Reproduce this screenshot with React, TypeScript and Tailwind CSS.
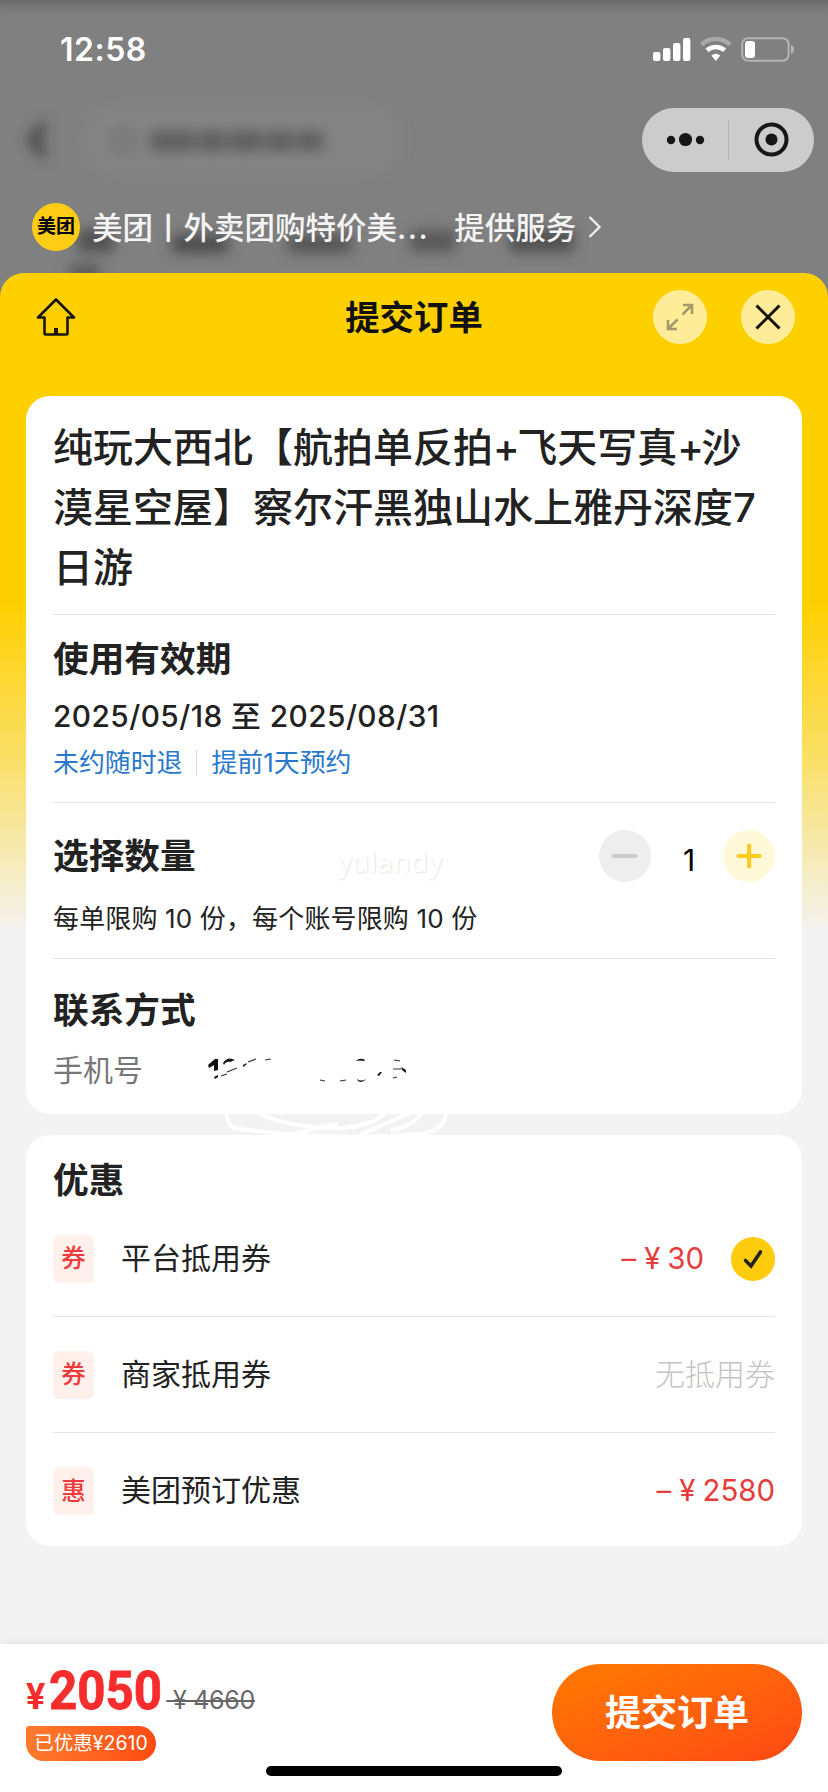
import type { ReactNode } from 'react';

const FONT = "font-['Inter','Noto_Sans_CJK_SC',sans-serif]";

interface DiscountRow {
  tag: string;
  label: string;
  value: string;
  available: boolean;
  checked?: boolean;
}

const discounts: DiscountRow[] = [
  { tag: '券', label: '平台抵用券', value: '30', available: true, checked: true },
  { tag: '券', label: '商家抵用券', value: '无抵用券', available: false },
  { tag: '惠', label: '美团预订优惠', value: '2580', available: true },
];

function StatusIcons() {
  return (
    <svg width="144" height="26" viewBox="0 0 144 26" fill="none">
      <rect x="1" y="16" width="7.4" height="9" rx="2" fill="#fff" />
      <rect x="11" y="12" width="7.4" height="13" rx="2" fill="#fff" />
      <rect x="21" y="7" width="7.4" height="18" rx="2" fill="#fff" />
      <rect x="31" y="2" width="7.4" height="23" rx="2" fill="#fff" />
      <path d="M49.5 8.6a21 21 0 0 1 28.6 0" stroke="#a9a9a9" strokeWidth="4.4" />
      <path d="M55 14.3a13.2 13.2 0 0 1 17.6 0" stroke="#fff" strokeWidth="4.6" />
      <path d="M59.4 19.6a7 7 0 0 1 8.8 0L63.8 25z" fill="#fff" />
      <rect x="90.2" y="2.2" width="46.4" height="22.6" rx="6" stroke="#b4b4b4" strokeWidth="2" />
      <rect x="93" y="5" width="10" height="17" rx="3" fill="#fff" />
      <path d="M139 9c4 1.4 4 7.6 0 9z" fill="#b4b4b4" />
    </svg>
  );
}

/* Page that sits out of focus behind the sheet */
function BlurredPage() {
  return (
    <svg className="absolute inset-0" width="828" height="290" viewBox="0 0 828 290" fill="none">
      <defs>
        <filter id="soft" x="-50%" y="-100%" width="200%" height="300%">
          <feGaussianBlur stdDeviation="6.5" />
        </filter>
      </defs>
      <rect x="-10" y="-10" width="848" height="13" fill="#5c5c5c" filter="url(#soft)" />
      <g filter="url(#soft)">
        <rect x="83" y="106" width="318" height="68" rx="34" fill="#848484" />
        <path d="M45 124L32 140l13 16" stroke="#3c3c3c" strokeWidth="8" />
        <circle cx="123" cy="141" r="10" stroke="#6c6c6c" strokeWidth="5" />
        <path d="M149 141h46M198 141h28M229 141h34M266 141h28M297 141h27" stroke="#5e5e5e" strokeWidth="22" />
        <rect x="78" y="230" width="36" height="22" fill="#505050" />
        <rect x="172" y="235" width="56" height="18" fill="#4c4c4c" />
        <rect x="288" y="235" width="64" height="18" fill="#545454" />
        <rect x="410" y="230" width="46" height="22" fill="#585858" />
        <rect x="510" y="230" width="64" height="22" fill="#505050" />
        <rect x="70" y="264" width="30" height="18" fill="#585858" />
      </g>
    </svg>
  );
}

function RoundButton({ children }: { children: ReactNode }) {
  return (
    <button className="flex h-[54px] w-[54px] items-center justify-center rounded-full bg-[#ffec99]">
      {children}
    </button>
  );
}

function SheetHeader() {
  return (
    <header className="flex h-[88px] items-center pl-[36px] pr-[33px]">
      <div className="flex-1">
        <svg width="40" height="40" viewBox="0 0 40 40" fill="none" stroke="#1a1400" strokeWidth="2.6" strokeLinejoin="round">
          <path d="M20 2.5L2 20.5h6.5v16a1 1 0 0 0 1 1h21a1 1 0 0 0 1-1v-16H38z" />
          <path d="M20 31v7" strokeWidth="4" />
        </svg>
      </div>
      <h1 className="pr-[3px] pt-[2px] text-[34.4px] font-bold leading-[48px] text-[#111]">提交订单</h1>
      <div className="flex flex-1 justify-end gap-[34px]">
        <RoundButton>
          <svg width="30" height="30" viewBox="0 0 30 30" fill="none" stroke="#a39a6c" strokeWidth="2.6">
            <path d="M17.5 12.5L27 3M18 3h9v9M12.5 17.5L3 27M3 18v9h9" />
          </svg>
        </RoundButton>
        <RoundButton>
          <svg width="28" height="28" viewBox="0 0 28 28" fill="none" stroke="#14110a" strokeWidth="3">
            <path d="M2.5 2.5l23 23M25.5 2.5l-23 23" />
          </svg>
        </RoundButton>
      </div>
    </header>
  );
}

function SectionTitle({ children }: { children: ReactNode }) {
  return <h2 className="text-[35.7px] font-bold leading-[44px] text-[#222]">{children}</h2>;
}

/* What is left of the phone number after it was scribbled over */
function MaskedPhone() {
  return (
    <svg className="absolute left-[200px] top-[1050px]" width="260" height="90" viewBox="0 0 260 90" fill="none">
      <g fill="#111">
        <path d="M8 15l7-6h3v11l-4 1v-6l-5 3z" />
        <path d="M14 27l4-2v2l-3 2zM23 13q4-6 9-4l3 1-5 2q-4-1-6 3z" />
        <path d="M43 15l4-2-1 2-3 2zM156 11q4-4 9-1l-1 1q-3-1-8 0zM157 29q4 3 9 0-2 3-5 3t-4-3z" />
        <path d="M177 25l3-3h2l-3 4zM201 17l5 3v3l-4-3z" />
      </g>
      <g stroke="#333" strokeWidth="1.2">
        <path d="M21 26l6-2M27 22l10-4M48 12l8-3M65 10l6-1M120 30l5 1M140 31l6-1M194 10l6 1M193 28l4-1M193 19l8 0" />
      </g>
      <g stroke="#fff" strokeWidth="4" strokeLinecap="round">
        <path d="M26 62q2 14 8 16 90 14 188 6 22-4 24-20" />
        <path d="M60 64q30 14 80 14 32-2 44-14M208 64l-46 20M222 62q-8 14-30 18M92 84l44-10" />
      </g>
    </svg>
  );
}

function ProductCard() {
  return (
    <section className="h-[718px] rounded-[24px] bg-white px-[27px]">
      <div className="h-[219px] border-b border-[#e2e2e2] pt-[22px]">
        <p className="text-[40px] font-medium leading-[60px] text-[#222]">
          纯玩大西北【航拍单反拍<span className="tracking-[-2.5px]">+</span>飞天写真<span className="tracking-[-2.5px]">+</span>沙
          <br />
          漠星空屋】察尔汗黑独山水上雅丹深度7
          <br />
          日游
        </p>
      </div>

      <div className="h-[188px] border-b border-[#e2e2e2] pt-[22px]">
        <SectionTitle>使用有效期</SectionTitle>
        <p className="mt-[15px] text-[29.8px] font-medium leading-[40px] tracking-[0.45px] text-[#222]">
          2025/05/18 至 2025/08/31
        </p>
        <div className="mt-[11px] flex items-center text-[25.9px] leading-[32px] text-[#2878cc]">
          <span>未约随时退</span>
          <span className="mx-[14px] h-[26px] w-px bg-[#dcdcdc]" />
          <span>提前1天预约</span>
        </div>
      </div>

      <div className="h-[156px] border-b border-[#e2e2e2] pt-[27px]">
        <div className="flex items-center">
          <SectionTitle>选择数量</SectionTitle>
          <span className="ml-[142px] mt-[10px] font-['Open_Sans',sans-serif] text-[28px] leading-[36px] tracking-[0.4px] text-white [text-shadow:1px_1px_2px_#e2e2e2]">
            yulandy
          </span>
          <div className="ml-auto flex items-center">
            <button className="flex h-[52px] w-[52px] items-center justify-center rounded-full bg-[#eee]">
              <span className="h-[4px] w-[26px] rounded-full bg-[#ccc]" />
            </button>
            <span className="w-[72px] pl-[4px] pt-[7px] text-center text-[30px] leading-[40px] text-black">1</span>
            <button className="flex h-[52px] w-[52px] items-center justify-center rounded-full bg-[#fff9d9]">
              <svg width="26" height="26" viewBox="0 0 26 26" stroke="#ffcb1f" strokeWidth="4.2" strokeLinecap="round">
                <path d="M13 2.5v21M2.5 13h21" />
              </svg>
            </button>
          </div>
        </div>
        <p className="mt-[21px] text-[26px] leading-[32px] tracking-[0.15px] text-[#222]">每单限购 10 份，每个账号限购 10 份</p>
      </div>

      <div className="pt-[29px]">
        <SectionTitle>联系方式</SectionTitle>
        <p className="mt-[18px] text-[30px] leading-[40px] text-[#777]">手机号</p>
      </div>
    </section>
  );
}

function DiscountCard() {
  return (
    <section className="mt-[21px] h-[411px] rounded-[24px] bg-white px-[27px] pt-[23px]">
      <SectionTitle>优惠</SectionTitle>
      <ul className="-mt-px divide-y divide-[#e2e2e2]">
        {discounts.map((row) => (
          <li key={row.label} className="flex h-[116px] items-center">
            <span className="flex h-[48px] w-[41px] items-center justify-center rounded-[6px] bg-[#fff0ec] text-[24.5px] font-medium text-[#ee3a3a]">
              {row.tag}
            </span>
            <span className="ml-[27px] pb-[2px] text-[30px] leading-[40px] text-[#222]">{row.label}</span>
            {row.available ? (
              <span className="ml-auto flex items-center text-[29.4px] leading-[40px] text-[#e63c3c]">
                <span>–</span>
                <span className="ml-[8px]">¥</span>
                <span className="ml-[7px]">{row.value}</span>
              </span>
            ) : (
              <span className="ml-auto pb-[2px] text-[30px] font-light leading-[40px] text-[#c4c4c4]">{row.value}</span>
            )}
            {row.checked && (
              <span className="ml-[27px] flex h-[44px] w-[44px] items-center justify-center rounded-full bg-[#ffcb0d]">
                <svg width="22" height="20" viewBox="0 0 22 20" fill="none" stroke="#222" strokeWidth="3.6" strokeLinecap="round">
                  <path d="M3.5 11.5l5.5 5.5L18.5 3" />
                </svg>
              </span>
            )}
          </li>
        ))}
      </ul>
    </section>
  );
}

function CheckoutBar() {
  return (
    <footer className="relative flex h-[148px] justify-between bg-white pl-[26px] pr-[26px] shadow-[0_-2px_8px_rgba(0,0,0,0.06)]">
      <div>
        <div className="mt-[18px] flex h-[58px] items-baseline whitespace-nowrap">
          <span className="font-['Roboto',sans-serif] text-[36px] font-bold leading-[58px] text-[#f72c2c]">¥</span>
          <span className="ml-[4px] inline-block w-[113px] origin-left scale-x-[0.93] font-['Roboto',sans-serif] text-[53px] font-bold leading-[58px] text-[#f72c2c] [-webkit-text-stroke:0.8px_#f72c2c]">
            2050
          </span>
          <span className="ml-[4px] text-[25px] tracking-[-0.3px] text-[#666] line-through decoration-2">&nbsp;¥ 4660</span>
        </div>
        <div className="mt-[6px] flex h-[35px] w-[130px] items-center justify-center rounded-[18px] rounded-tl-[3px] bg-gradient-to-r from-[#ff7a2e] to-[#ff4a12] text-[19.5px] text-white">
          已优惠¥2610
        </div>
      </div>
      <button className="mt-[20px] h-[97px] w-[250px] rounded-full bg-gradient-to-br from-[#ff7a00] to-[#ff4713] text-[36px] font-bold leading-[94px] text-white">
        提交订单
      </button>
      <span className="absolute bottom-[16px] left-[266px] h-[10px] w-[296px] rounded-full bg-black" />
    </footer>
  );
}

export default function App() {
  return (
    <div className={`relative flex h-[1792px] w-[828px] flex-col overflow-hidden bg-[#808080] ${FONT}`}>
      <BlurredPage />

      <div className="relative h-[273px]">
        <div className="flex h-[98px] items-center justify-between pl-[60px] pr-[32px]">
          <span className="pt-[2px] text-[32px] font-semibold leading-[40px] tracking-[0.5px] text-white">12:58</span>
          <StatusIcons />
        </div>

        <div className="mt-[10px] flex justify-end pr-[14px]">
          <div className="flex h-[64px] w-[172px] items-center rounded-full bg-[#ccc]">
            <svg width="86" height="40" viewBox="0 0 86 40" fill="#161616">
              <circle cx="29" cy="20" r="4.2" />
              <circle cx="43.5" cy="19.5" r="6.6" />
              <circle cx="58" cy="20" r="4.2" />
            </svg>
            <span className="h-[40px] w-px bg-[#b4b4b4]" />
            <svg width="85" height="40" viewBox="0 0 85 40" fill="none">
              <circle cx="42.5" cy="19.5" r="15" stroke="#161616" strokeWidth="4" />
              <circle cx="42.5" cy="19.5" r="6" fill="#161616" />
            </svg>
          </div>
        </div>

        <div className="mt-[31px] flex h-[48px] items-center pl-[32px] text-[30.5px] leading-[40px] text-[#f4f4f4]">
          <span className="flex h-[48px] w-[48px] items-center justify-center rounded-full bg-[#ffcc16] text-[19px] font-bold text-black">
            美团
          </span>
          <span className="ml-[12px] whitespace-nowrap pt-px font-medium">
            美团丨外卖团购特价美<span className="tracking-[1.5px]">...</span>
          </span>
          <span className="ml-[25px] pt-px font-medium">提供服务</span>
          <svg className="ml-[11px]" width="16" height="24" viewBox="0 0 16 24" fill="none" stroke="#eee" strokeWidth="2.4">
            <path d="M2.5 2l10 10-10 10" />
          </svg>
        </div>
      </div>

      <main className="relative flex-1 overflow-hidden rounded-t-[24px] bg-[linear-gradient(to_bottom,#ffd000_0px,#ffd000_330px,#f9e06a_490px,#f3f3f4_662px,#f3f3f3_700px)]">
        <SheetHeader />
        <div className="px-[26px] pt-[35px]">
          <ProductCard />
          <DiscountCard />
        </div>
      </main>

      <CheckoutBar />
      <MaskedPhone />
    </div>
  );
}
